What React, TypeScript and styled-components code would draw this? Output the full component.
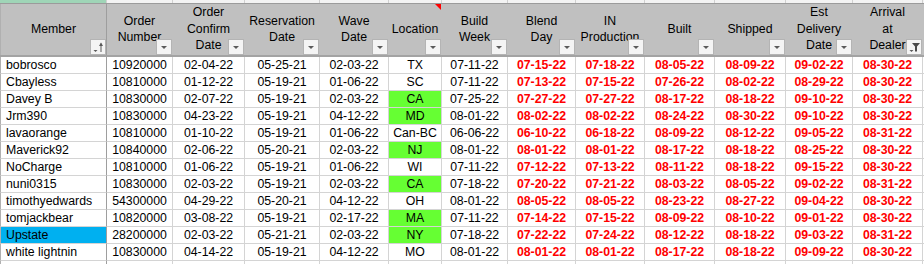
import { FC } from "react";
import styled, { createGlobalStyle } from "styled-components";

const GlobalStyle = createGlobalStyle`
  body {
    margin: 0;
    background: #ffffff;
    overflow: hidden;
  }
`;

const COLS = "107px 66px 72px 75px 69px 53px 66px 68px 69px 70px 71px 67px 70px 1fr";

type Icon = "sort" | "filter" | "drop";

const headers: { lines: string[]; icon: Icon; note?: boolean }[] = [
  { lines: ["Member"], icon: "sort" },
  { lines: ["Order", "Number"], icon: "drop" },
  { lines: ["Order", "Confirm", "Date"], icon: "drop" },
  { lines: ["Reservation", "Date"], icon: "drop" },
  { lines: ["Wave", "Date"], icon: "drop" },
  { lines: ["Location"], icon: "drop", note: true },
  { lines: ["Build", "Week"], icon: "drop" },
  { lines: ["Blend", "Day"], icon: "drop" },
  { lines: ["IN", "Production"], icon: "drop" },
  { lines: ["Built"], icon: "drop" },
  { lines: ["Shipped"], icon: "drop" },
  { lines: ["Est", "Delivery", "Date"], icon: "drop" },
  { lines: ["Arrival", "at", "Dealer"], icon: "filter" },
];

// member, order, confirm, reservation, wave, location, build, blend, in, built, shipped, est, arrival
const rows: { cells: string[]; green?: boolean; blue?: boolean }[] = [
  { cells: ["bobrosco", "10920000", "02-04-22", "05-25-21", "02-03-22", "TX", "07-11-22", "07-15-22", "07-18-22", "08-05-22", "08-09-22", "09-02-22", "08-30-22"] },
  { cells: ["Cbayless", "10810000", "01-12-22", "05-19-21", "01-06-22", "SC", "07-11-22", "07-13-22", "07-15-22", "07-26-22", "08-02-22", "08-29-22", "08-30-22"] },
  { cells: ["Davey B", "10830000", "02-07-22", "05-19-21", "02-03-22", "CA", "07-25-22", "07-27-22", "07-27-22", "08-17-22", "08-18-22", "09-10-22", "08-30-22"], green: true },
  { cells: ["Jrm390", "10830000", "04-23-22", "05-19-21", "04-12-22", "MD", "08-01-22", "08-02-22", "08-02-22", "08-24-22", "08-30-22", "09-10-22", "08-30-22"], green: true },
  { cells: ["lavaorange", "10810000", "01-10-22", "05-19-21", "01-06-22", "Can-BC", "06-06-22", "06-10-22", "06-18-22", "08-09-22", "08-12-22", "09-05-22", "08-31-22"] },
  { cells: ["Maverick92", "10840000", "02-06-22", "05-20-21", "02-03-22", "NJ", "08-01-22", "08-01-22", "08-01-22", "08-17-22", "08-18-22", "08-25-22", "08-30-22"], green: true },
  { cells: ["NoCharge", "10810000", "01-06-22", "05-19-21", "01-06-22", "WI", "07-11-22", "07-12-22", "07-13-22", "08-11-22", "08-18-22", "09-15-22", "08-30-22"] },
  { cells: ["nuni0315", "10830000", "02-03-22", "05-19-21", "02-03-22", "CA", "07-18-22", "07-20-22", "07-21-22", "08-03-22", "08-05-22", "09-02-22", "08-31-22"], green: true },
  { cells: ["timothyedwards", "54300000", "04-29-22", "05-20-21", "04-12-22", "OH", "08-01-22", "08-05-22", "08-05-22", "08-23-22", "08-27-22", "09-04-22", "08-30-22"] },
  { cells: ["tomjackbear", "10820000", "03-08-22", "05-19-21", "02-17-22", "MA", "07-11-22", "07-14-22", "07-15-22", "08-09-22", "08-10-22", "09-01-22", "08-30-22"], green: true },
  { cells: ["Upstate", "28200000", "02-03-22", "05-21-21", "02-03-22", "NY", "07-18-22", "07-22-22", "07-24-22", "08-12-22", "08-18-22", "09-03-22", "08-31-22"], green: true, blue: true },
  { cells: ["white lightnin", "10830000", "04-14-22", "05-19-21", "04-12-22", "MO", "08-01-22", "08-01-22", "08-01-22", "08-17-22", "08-18-22", "09-09-22", "08-30-22"] },
];

const FilterIcon: FC<{ kind: Icon }> = ({ kind }) => (
  <svg width="14" height="14" viewBox="0 0 14 14">
    {kind === "drop" && <polygon points="4,6 10,6 7,9" fill="#5a5a5a" />}
    {kind === "sort" && (
      <>
        <polygon points="2.5,10 6.5,10 4.5,12" fill="#5a5a5a" />
        <rect x="9.5" y="3.5" width="1" height="8.5" fill="#5a5a5a" />
        <polygon points="8,6 10,2.5 12,6" fill="#5a5a5a" />
      </>
    )}
    {kind === "filter" && (
      <>
        <polygon points="2.5,10 6.5,10 4.5,12" fill="#5a5a5a" />
        <polygon points="5,3 13,3 10,6.5 10,11.5 8,11.5 8,6.5" fill="#4a4a4a" />
      </>
    )}
  </svg>
);

const App: FC = () => {
  const lastCol = headers.length;
  return (
    <>
      <GlobalStyle />
      <Sheet>
        <LetterRow>
          {headers.map((_, i) => (
            <LetterCell key={i} $active={i === 0} />
          ))}
          <LetterCell $last />
        </LetterRow>
        <HeaderRow>
          {headers.map((h, i) => (
            <HeaderCell key={i} $frozen={i === 0}>
              {h.lines.map((l) => (
                <HeaderLine key={l}>{l}</HeaderLine>
              ))}
              {h.note && <CommentMark />}
              <DropButton>
                <FilterIcon kind={h.icon} />
              </DropButton>
            </HeaderCell>
          ))}
          <HeaderCell $frozen={false} />
        </HeaderRow>
        {rows.map((r) => (
          <DataRow key={r.cells[0]}>
            {r.cells.map((c, i) => (
              <Cell
                key={i}
                $member={i === 0}
                $red={i >= 7}
                $fill={i === 0 && r.blue ? "#00b0f0" : i === 5 && r.green ? "#66ff33" : undefined}
              >
                {c}
              </Cell>
            ))}
            <Cell $last />
          </DataRow>
        ))}
        <DataRow>
          {Array.from({ length: lastCol }).map((_, i) => (
            <Cell key={i} $member={i === 0} />
          ))}
          <Cell $last />
        </DataRow>
      </Sheet>
    </>
  );
};

export default App;

const Sheet = styled.div`
  width: 924px;
  height: 264px;
  overflow: hidden;
  font-family: "Liberation Sans", Arial, sans-serif;
  font-size: 12.3px;
  color: #000000;
`;

const LetterRow = styled.div`
  display: grid;
  grid-template-columns: ${COLS};
  height: 4px;
  border-bottom: 1px solid #9b9b9b;
  box-sizing: border-box;
`;

const LetterCell = styled.div<{ $active?: boolean; $last?: boolean }>`
  background: ${({ $active }) => ($active ? "#9fd5b7" : "#f3f3f3")};
  border-right: ${({ $last }) => ($last ? "none" : "1px solid #d0d0d0")};
`;

const HeaderRow = styled.div`
  display: grid;
  grid-template-columns: ${COLS};
  height: 53px;
  border-bottom: 2px solid #a3a3a3;
  box-sizing: border-box;
  background: #c0c0c0;
`;

const HeaderCell = styled.div<{ $frozen: boolean }>`
  position: relative;
  display: flex;
  flex-direction: column;
  align-items: center;
  justify-content: center;
  overflow: hidden;
  border-left: ${({ $frozen }) => ($frozen ? "1px solid #b0b0b0" : "none")};
  border-right: 1px solid ${({ $frozen }) => ($frozen ? "#9e9e9e" : "#c0c0c0")};
  padding-bottom: 1px;
`;

const HeaderLine = styled.span`
  display: block;
  white-space: nowrap;
  line-height: 16.5px;
`;

const DropButton = styled.div`
  position: absolute;
  right: 0;
  bottom: 0;
  width: 16px;
  height: 16px;
  box-sizing: border-box;
  border: 1px solid #b4b4b4;
  background: #f4f4f4;
  display: flex;
  align-items: center;
  justify-content: center;
`;

const CommentMark = styled.div`
  position: absolute;
  top: 0;
  right: 0;
  width: 0;
  height: 0;
  border-top: 6px solid #ff0000;
  border-left: 6px solid transparent;
`;

const DataRow = styled.div`
  display: grid;
  grid-template-columns: ${COLS};
  height: 17px;
`;

const Cell = styled.div<{ $member?: boolean; $red?: boolean; $fill?: string; $last?: boolean }>`
  box-sizing: border-box;
  height: 17px;
  line-height: 16px;
  white-space: nowrap;
  overflow: hidden;
  border-bottom: 1px solid #d4d4d4;
  border-right: ${({ $member, $last }) =>
    $last ? "none" : $member ? "1px solid #9e9e9e" : "1px solid #d4d4d4"};
  border-left: ${({ $member }) => ($member ? "1px solid #b0b0b0" : "none")};
  padding-left: ${({ $member }) => ($member ? "5px" : "0")};
  text-align: ${({ $member }) => ($member ? "left" : "center")};
  background: ${({ $fill }) => $fill ?? "#ffffff"};
  color: ${({ $red }) => ($red ? "#ff0000" : "#000000")};
  font-weight: ${({ $red }) => ($red ? 700 : 400)};
`;
